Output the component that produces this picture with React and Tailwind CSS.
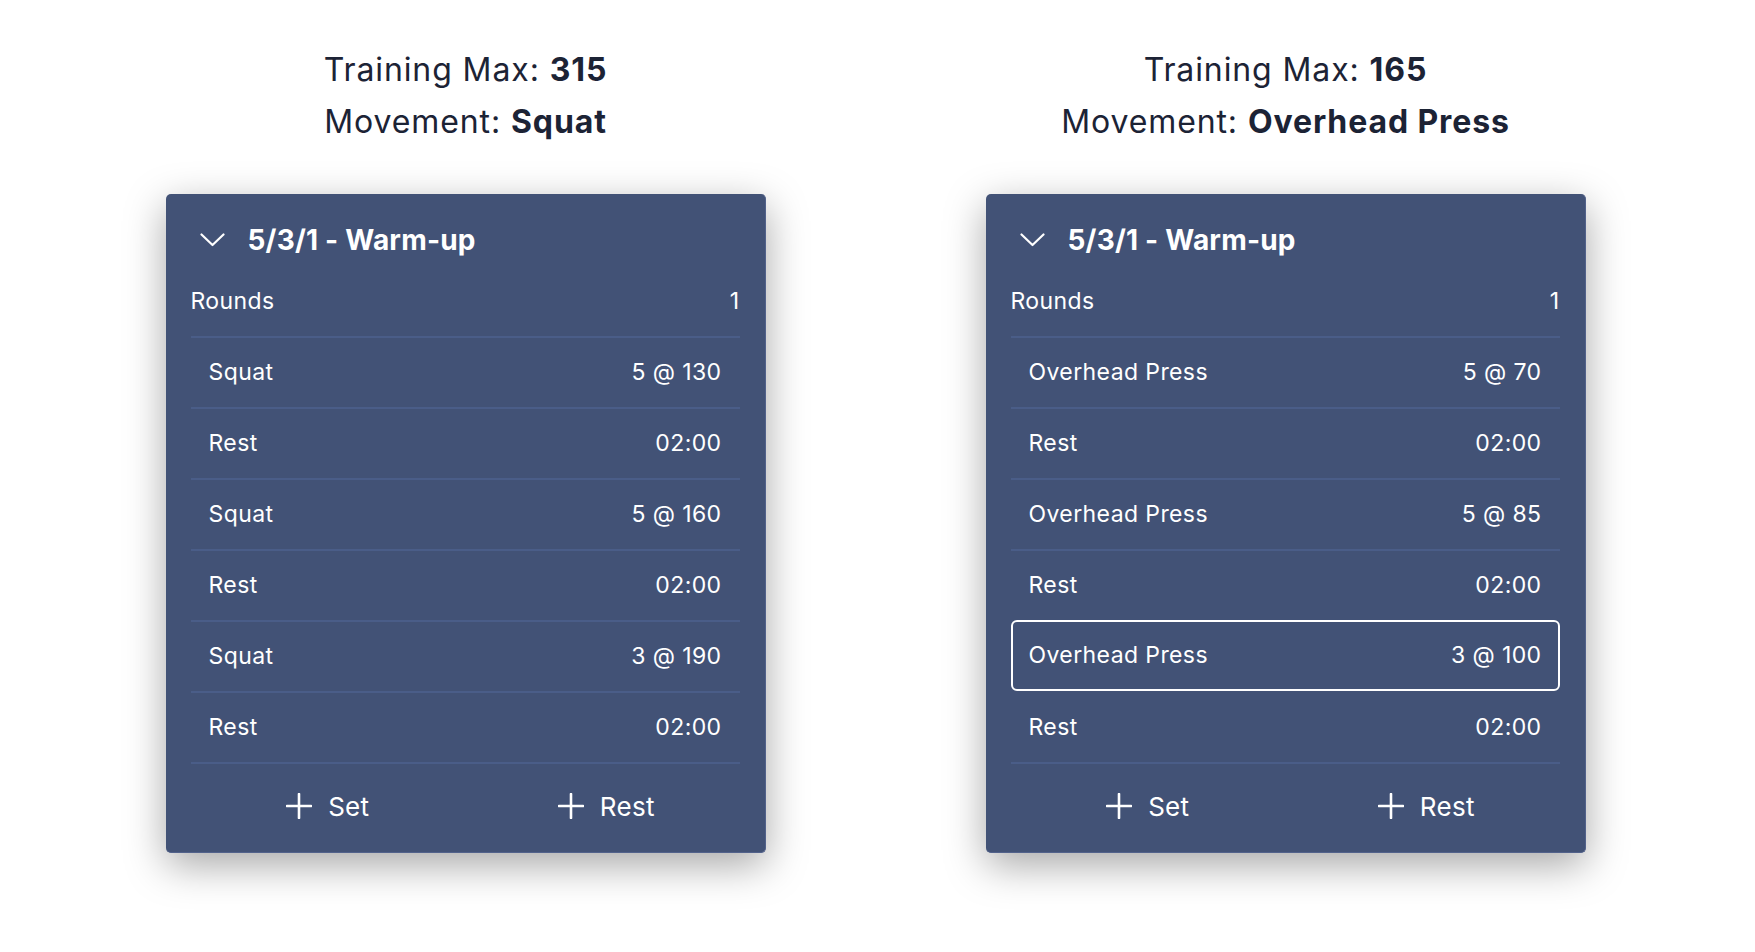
import React from "react";

const cards = [
  {
    max: 315,
    movement: "Squat",
    rows: [
      ["Squat", "5 @ 130"],
      ["Rest", "02:00"],
      ["Squat", "5 @ 160"],
      ["Rest", "02:00"],
      ["Squat", "3 @ 190"],
      ["Rest", "02:00"],
    ],
    active: -1,
  },
  {
    max: 165,
    movement: "Overhead Press",
    rows: [
      ["Overhead Press", "5 @ 70"],
      ["Rest", "02:00"],
      ["Overhead Press", "5 @ 85"],
      ["Rest", "02:00"],
      ["Overhead Press", "3 @ 100"],
      ["Rest", "02:00"],
    ],
    active: 4,
  },
];

function Chevron() {
  return (
    <svg width="25" height="14" viewBox="0 0 25 14" fill="none" className="shrink-0">
      <polyline points="1.5,1.5 12.5,12 23.5,1.5" stroke="white" strokeWidth="2.2" strokeLinecap="round" strokeLinejoin="round" />
    </svg>
  );
}

function Plus() {
  return (
    <svg width="26" height="26" viewBox="0 0 26 26" fill="none" className="shrink-0">
      <path d="M13 1v24M1 13h24" stroke="white" strokeWidth="2.6" strokeLinecap="round" />
    </svg>
  );
}

function WorkoutCard({ card }) {
  return (
    <div className="flex flex-col items-center">
      <div className="pt-[44px] mb-[46px] text-center text-[32px] leading-[52px] tracking-[0.9px] text-[#1c2335]">
        <div>
          Training Max: <span className="font-bold">{card.max}</span>
        </div>
        <div>
          Movement: <span className="font-bold">{card.movement}</span>
        </div>
      </div>

      <div className="w-[600px] bg-[#425276] rounded-[5px] border-r border-b border-[#52628b] shadow-[0_12px_40px_rgba(0,0,0,0.35)] px-[25px] pt-[20px] text-white">
        <div className="h-[52px] flex items-center gap-[23px] pl-[9px]">
          <Chevron />
          <span className="text-[28px] font-bold tracking-[0.2px]">5/3/1 - Warm-up</span>
        </div>
        <div className="h-[70px] flex items-center justify-between text-[23px] tracking-[0.4px]">
          <span>Rounds</span>
          <span>1</span>
        </div>
        {card.rows.map(([name, value], i) => {
          const isActive = i === card.active;
          const afterActive = i === card.active + 1 && card.active >= 0;
          return (
            <div
              key={i}
              className={
                isActive
                  ? "h-[71px] flex items-center justify-between px-4 border-2 border-white rounded-md text-[23px] tracking-[0.4px]"
                  : afterActive
                  ? "h-[71px] flex items-center justify-between px-[18px] border-t-2 border-transparent text-[23px] tracking-[0.4px]"
                  : "h-[71px] flex items-center justify-between px-[18px] border-t-2 border-[#4a5d88] text-[23px] tracking-[0.4px]"
              }
            >
              <span>{name}</span>
              <span>{value}</span>
            </div>
          );
        })}
        <div className="h-[2px] bg-[#4a5d88]" />
        <div className="h-[88px] pb-[4px] grid grid-cols-2 text-[26px] tracking-[0.3px]">
          <button type="button" className="flex items-center justify-center gap-4">
            <Plus />
            <span>Set</span>
          </button>
          <button type="button" className="flex items-center justify-center gap-4 pl-[8px]">
            <Plus />
            <span>Rest</span>
          </button>
        </div>
      </div>
    </div>
  );
}

export default function App() {
  return (
    <div className="w-full min-h-screen bg-white flex justify-center gap-[220px] pr-[4px] font-['Inter',sans-serif]">
      {cards.map((card) => (
        <WorkoutCard key={card.max} card={card} />
      ))}
    </div>
  );
}
